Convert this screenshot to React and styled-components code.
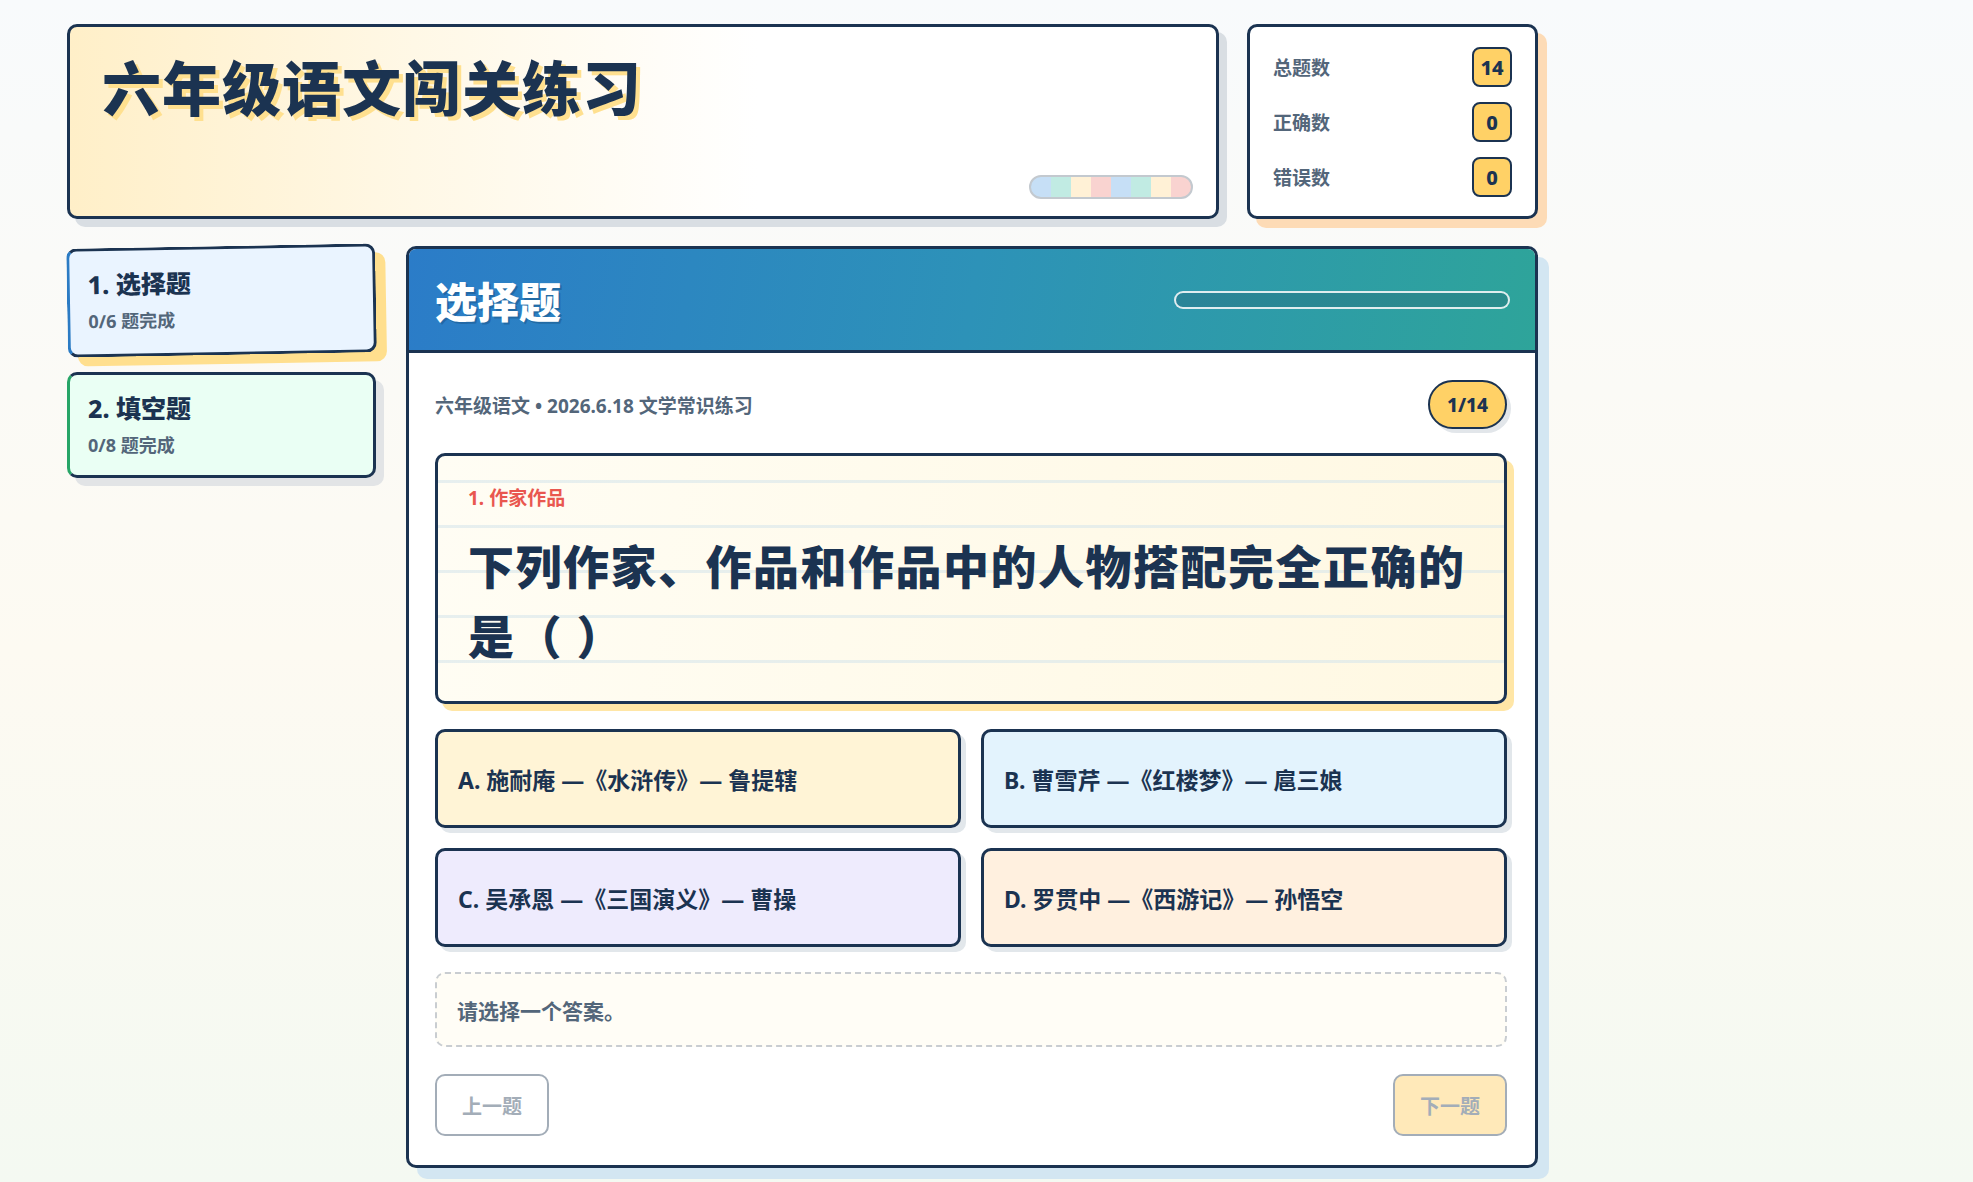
import React from 'react';
import styled, { createGlobalStyle } from 'styled-components';

const navy = '#1b3351';
const slate = '#53667a';

const GlobalStyle = createGlobalStyle`
    html, body {
        margin: 0;
        padding: 0;
    }
    body {
        font-family: "Noto Sans", "Noto Sans CJK SC", sans-serif;
        color: ${navy};
        background: linear-gradient(180deg, #f8fafc 0%, #fdfaf2 55%, #f4f9f2 100%);
        min-height: 100vh;
        overflow: hidden;
    }
`;

const Page = styled.div`
    padding: 24px 0 0 67px;
    width: 1472px;
`;

const TopRow = styled.div`
    display: flex;
    gap: 28px;
`;

const HeroCard = styled.header`
    box-sizing: border-box;
    width: 1152px;
    height: 195px;
    border: 3px solid ${navy};
    border-radius: 10px;
    background: linear-gradient(90deg, #ffefc8 0%, #fff8e6 30%, #ffffff 60%);
    box-shadow: 8px 8px 0 #d9dee3;
    padding: 26px 23px 17px 32px;
    display: flex;
    flex-direction: column;
`;

const HeroTitle = styled.h1`
    margin: 0;
    font-size: 59px;
    line-height: 1.2;
    font-weight: 900;
    letter-spacing: 1px;
    color: ${navy};
    text-shadow: 4px 4px 0 #ffe08f;
`;

const Stripe = styled.div`
    margin-top: auto;
    align-self: flex-end;
    box-sizing: border-box;
    width: 164px;
    height: 24px;
    border: 2px solid #c3c9cf;
    border-radius: 12px;
    background: repeating-linear-gradient(
        90deg,
        #c6dff6 0 20px,
        #c1ebe3 20px 40px,
        #fff1d6 40px 60px,
        #f9d3d0 60px 80px
    );
`;

const StatsCard = styled.aside`
    box-sizing: border-box;
    width: 291px;
    height: 195px;
    border: 3px solid ${navy};
    border-radius: 10px;
    background: #fff;
    box-shadow: 9px 9px 0 #fddbb6;
    padding: 20px 23px;
    display: flex;
    flex-direction: column;
    gap: 15px;
`;

const StatRow = styled.div`
    display: flex;
    align-items: center;
    justify-content: space-between;
    height: 40px;
`;

const StatLabel = styled.span`
    font-size: 19px;
    font-weight: 700;
    color: ${slate};
`;

const StatBadge = styled.span`
    box-sizing: border-box;
    min-width: 40px;
    height: 40px;
    padding: 0 6px;
    border: 2px solid ${navy};
    border-radius: 8px;
    background: #ffd166;
    display: flex;
    align-items: center;
    justify-content: center;
    font-size: 20px;
    font-weight: 800;
    color: ${navy};
`;

const MainRow = styled.div`
    display: flex;
    gap: 30px;
    margin-top: 27px;
    align-items: flex-start;
`;

const Sidebar = styled.nav`
    width: 309px;
    display: flex;
    flex-direction: column;
    gap: 17px;
`;

const SectionCard = styled.div`
    box-sizing: border-box;
    height: ${(p) => p.$h}px;
    border: 3px solid ${navy};
    border-left-color: ${(p) => p.$accent};
    border-radius: 10px;
    background: ${(p) => p.$bg};
    box-shadow: ${(p) => (p.$active ? '10px 9px' : '8px 8px')} 0 ${(p) => p.$shadow};
    padding: 16px 18px;
    transform: rotate(${(p) => (p.$active ? '-1deg' : '0deg')});
`;

const SectionTitle = styled.div`
    font-size: 25px;
    font-weight: 800;
    line-height: 1.4;
    color: ${navy};
`;

const SectionSub = styled.div`
    margin-top: 5px;
    font-size: 18px;
    font-weight: 700;
    color: ${slate};
`;

const Panel = styled.section`
    box-sizing: border-box;
    width: 1132px;
    border: 3px solid ${navy};
    border-radius: 10px;
    background: #fff;
    box-shadow: 11px 11px 0 #d3e6f2;
    overflow: hidden;
`;

const PanelHead = styled.div`
    height: 104px;
    box-sizing: border-box;
    border-bottom: 3px solid ${navy};
    background: linear-gradient(100deg, #2b7cc8 0%, #2d92b8 50%, #2ea49a 100%);
    display: flex;
    align-items: center;
    justify-content: space-between;
    padding: 0 25px 0 26px;
`;

const PanelTitle = styled.h2`
    margin: 0;
    font-size: 42px;
    font-weight: 900;
    color: #fff;
    text-shadow: 2px 2px 0 rgba(10, 40, 70, 0.25);
`;

const Progress = styled.div`
    box-sizing: border-box;
    width: 336px;
    height: 18px;
    border: 2px solid rgba(255, 255, 255, 0.85);
    border-radius: 9px;
    background: rgba(30, 70, 90, 0.25);
`;

const PanelBody = styled.div`
    padding: 27px 28px 29px 26px;
    display: flex;
    flex-direction: column;
`;

const MetaRow = styled.div`
    display: flex;
    align-items: center;
    justify-content: space-between;
`;

const MetaText = styled.span`
    font-size: 19px;
    font-weight: 700;
    color: ${slate};
`;

const CountPill = styled.span`
    box-sizing: border-box;
    width: 79px;
    height: 49px;
    border: 2px solid ${navy};
    border-radius: 25px;
    background: #ffd166;
    box-shadow: 4px 4px 0 #e2e6ea;
    display: flex;
    align-items: center;
    justify-content: center;
    font-size: 19px;
    font-weight: 800;
    color: ${navy};
`;

const QuestionCard = styled.div`
    box-sizing: border-box;
    margin-top: 24px;
    height: 251px;
    border: 3px solid ${navy};
    border-radius: 10px;
    background:
        repeating-linear-gradient(180deg, transparent 0 24px, rgba(215, 230, 235, 0.6) 24px 27px, transparent 27px 45px),
        linear-gradient(100deg, #fffdf4 0%, #fff8e2 100%);
    box-shadow: 7px 7px 0 #ffe6a6;
    padding: 31px 30px 30px;
`;

const QuestionTag = styled.div`
    font-size: 19px;
    font-weight: 700;
    line-height: 22px;
    color: #e9574f;
`;

const QuestionText = styled.div`
    margin-top: 22px;
    font-size: 46px;
    line-height: 70px;
    font-weight: 900;
    letter-spacing: 1.5px;
    color: ${navy};
`;

const Options = styled.div`
    margin-top: 25px;
    display: grid;
    grid-template-columns: 1fr 1fr;
    gap: 20px;
`;

const Option = styled.button`
    box-sizing: border-box;
    height: 99px;
    border: 3px solid ${navy};
    border-radius: 10px;
    background: ${(p) => p.$bg};
    box-shadow: 5px 5px 0 #e2e7eb;
    padding: 0 20px;
    text-align: left;
    font-family: inherit;
    font-size: 23px;
    font-weight: 700;
    color: ${navy};
    cursor: pointer;
`;

const Feedback = styled.div`
    box-sizing: border-box;
    margin-top: 25px;
    height: 75px;
    border: 2px dashed #c9cdd1;
    border-radius: 10px;
    background: #fffdf6;
    display: flex;
    align-items: center;
    padding: 0 20px;
    font-size: 21px;
    font-weight: 700;
    color: ${slate};
`;

const NavRow = styled.div`
    margin-top: 27px;
    display: flex;
    justify-content: space-between;
`;

const NavButton = styled.button`
    box-sizing: border-box;
    width: 114px;
    height: 62px;
    border: 2px solid #a3adb8;
    border-radius: 10px;
    background: ${(p) => (p.$primary ? '#ffe9b9' : '#fff')};
    font-family: inherit;
    font-size: 20px;
    font-weight: 700;
    color: #a3adb8;
`;

const sections = [
    { title: '1. 选择题', sub: '0/6 题完成', bg: '#eaf4ff', accent: '#2b7bc4', shadow: '#ffdf8e', h: 109, active: true },
    { title: '2. 填空题', sub: '0/8 题完成', bg: '#eafff4', accent: '#27a567', shadow: '#e2e4e6', h: 106 },
];

const options = [
    { text: 'A. 施耐庵 —《水浒传》— 鲁提辖', bg: '#fff4d6' },
    { text: 'B. 曹雪芹 —《红楼梦》— 扈三娘', bg: '#e3f3fd' },
    { text: 'C. 吴承恩 —《三国演义》— 曹操', bg: '#eeebfd' },
    { text: 'D. 罗贯中 —《西游记》— 孙悟空', bg: '#fff0df' },
];

const App = () => {
    return (
        <>
            <GlobalStyle />
            <Page>
                <TopRow>
                    <HeroCard>
                        <HeroTitle>六年级语文闯关练习</HeroTitle>
                        <Stripe />
                    </HeroCard>
                    <StatsCard>
                        <StatRow>
                            <StatLabel>总题数</StatLabel>
                            <StatBadge>14</StatBadge>
                        </StatRow>
                        <StatRow>
                            <StatLabel>正确数</StatLabel>
                            <StatBadge>0</StatBadge>
                        </StatRow>
                        <StatRow>
                            <StatLabel>错误数</StatLabel>
                            <StatBadge>0</StatBadge>
                        </StatRow>
                    </StatsCard>
                </TopRow>

                <MainRow>
                    <Sidebar>
                        {sections.map((s, i) => (
                            <SectionCard
                                key={i}
                                $bg={s.bg}
                                $accent={s.accent}
                                $shadow={s.shadow}
                                $h={s.h}
                                $active={s.active}
                            >
                                <SectionTitle>{s.title}</SectionTitle>
                                <SectionSub>{s.sub}</SectionSub>
                            </SectionCard>
                        ))}
                    </Sidebar>

                    <Panel>
                        <PanelHead>
                            <PanelTitle>选择题</PanelTitle>
                            <Progress />
                        </PanelHead>
                        <PanelBody>
                            <MetaRow>
                                <MetaText>六年级语文 • 2026.6.18 文学常识练习</MetaText>
                                <CountPill>1/14</CountPill>
                            </MetaRow>

                            <QuestionCard>
                                <QuestionTag>1. 作家作品</QuestionTag>
                                <QuestionText>下列作家、作品和作品中的人物搭配完全正确的是（ ）</QuestionText>
                            </QuestionCard>

                            <Options>
                                {options.map((o, i) => (
                                    <Option key={i} $bg={o.bg}>{o.text}</Option>
                                ))}
                            </Options>

                            <Feedback>请选择一个答案。</Feedback>

                            <NavRow>
                                <NavButton disabled>上一题</NavButton>
                                <NavButton $primary disabled>下一题</NavButton>
                            </NavRow>
                        </PanelBody>
                    </Panel>
                </MainRow>
            </Page>
        </>
    );
};

export default App;
